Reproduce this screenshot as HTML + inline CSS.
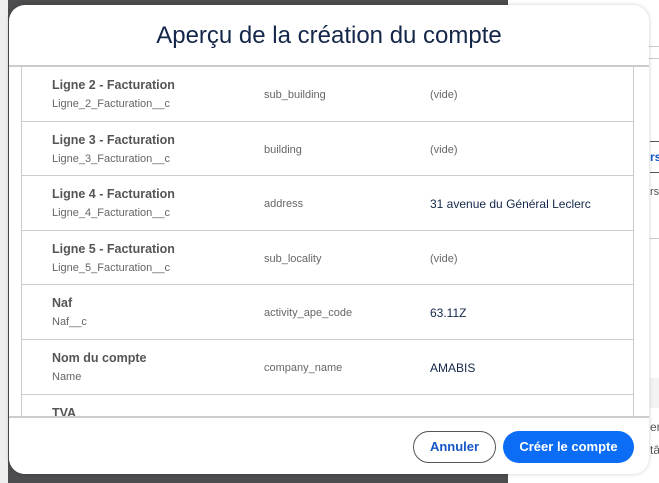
<!DOCTYPE html>
<html><head><style>
*{margin:0;padding:0;box-sizing:border-box}
body{width:659px;height:483px;overflow:hidden;background:#fff;font-family:"Liberation Sans","DejaVu Sans",sans-serif;position:relative}
.lg{position:absolute;left:0;top:0;width:8px;height:483px;background:#eee}
.dk{position:absolute;left:8px;top:0;width:500px;height:483px;background:#4d4d4f}
.rt{position:absolute;left:640px;color:#555;font-size:12px}
.modal{position:absolute;left:9px;top:5px;width:640px;height:469px;background:#fff;border-radius:16px;overflow:hidden;box-shadow:0 0 4px rgba(0,0,0,.2)}
.hd{height:62px;border-bottom:2px solid #ccc;text-align:center;font-size:24px;color:#14274a;line-height:62px;padding-left:0}
.tbl{position:absolute;left:12px;top:62px;width:613px;height:350px;border-left:1px solid #ccc;border-right:1px solid #ccc;overflow:hidden}
.row{height:54.6px;border-bottom:1px solid #ccc;position:relative}
.l{position:absolute;left:30px;top:11px;font-weight:bold;font-size:12.5px;color:#555}
.a{position:absolute;left:30px;top:31px;font-size:11px;color:#666}
.c2{position:absolute;left:242px;top:22px;font-size:11px;color:#666}
.c3{position:absolute;left:408px;top:21px;font-size:12px;color:#14274a}
.v{color:#666;font-size:11px;top:22px}
.ft{position:absolute;left:0;top:411px;width:640px;height:59px;border-top:2px solid #ccc;background:#fff}
.b1{position:absolute;left:404px;top:13px;width:83px;height:32px;border:1px solid #555;border-radius:16px;color:#1456c8;font-weight:bold;font-size:13px;text-align:center;line-height:30px}
.b2{position:absolute;left:494px;top:13px;width:131px;height:32px;background:#0b6cf5;border-radius:16px;color:#fff;font-weight:bold;font-size:13px;text-align:center;line-height:32px}
</style></head><body>
<div class="lg"></div><div class="dk"></div>
<div style="position:absolute;left:648px;top:46px;width:11px;border-top:1px solid #ccc"></div>
<div style="position:absolute;left:648px;top:58px;width:11px;border-top:1px solid #ccc"></div>
<div style="position:absolute;left:650px;top:141px;width:9px;border-top:1px solid #555"></div>
<div class="rt" style="left:650px;top:150px;color:#1456c8;font-weight:bold">rs</div>
<div style="position:absolute;left:650px;top:172px;width:9px;border-top:1px solid #555"></div>
<div class="rt" style="left:650px;top:186px;font-size:11px">rs</div>
<div style="position:absolute;left:650px;top:238px;width:9px;border-top:1px solid #ccc"></div>
<div style="position:absolute;left:650px;top:378px;width:9px;height:30px;background:#f3f3f3"></div>
<div class="rt" style="left:650px;top:420px">er</div>
<div class="rt" style="left:650px;top:443px">tâ</div>
<div class="modal">
<div class="hd">Aperçu de la création du compte</div>
<div class="tbl">
<div class="row"><div class="l">Ligne 2 - Facturation</div><div class="a">Ligne_2_Facturation__c</div><div class="c2">sub_building</div><div class="c3 v">(vide)</div></div>
<div class="row"><div class="l">Ligne 3 - Facturation</div><div class="a">Ligne_3_Facturation__c</div><div class="c2">building</div><div class="c3 v">(vide)</div></div>
<div class="row"><div class="l">Ligne 4 - Facturation</div><div class="a">Ligne_4_Facturation__c</div><div class="c2">address</div><div class="c3">31 avenue du Général Leclerc</div></div>
<div class="row"><div class="l">Ligne 5 - Facturation</div><div class="a">Ligne_5_Facturation__c</div><div class="c2">sub_locality</div><div class="c3 v">(vide)</div></div>
<div class="row"><div class="l">Naf</div><div class="a">Naf__c</div><div class="c2">activity_ape_code</div><div class="c3">63.11Z</div></div>
<div class="row"><div class="l">Nom du compte</div><div class="a">Name</div><div class="c2">company_name</div><div class="c3">AMABIS</div></div>
<div class="row"><div class="l">TVA</div><div class="a">TVA__c</div><div class="c2">vat_number</div><div class="c3">FR04480015781</div></div>
</div>
<div class="ft"><div class="b1">Annuler</div><div class="b2">Créer le compte</div></div>
</div>
</body></html>
